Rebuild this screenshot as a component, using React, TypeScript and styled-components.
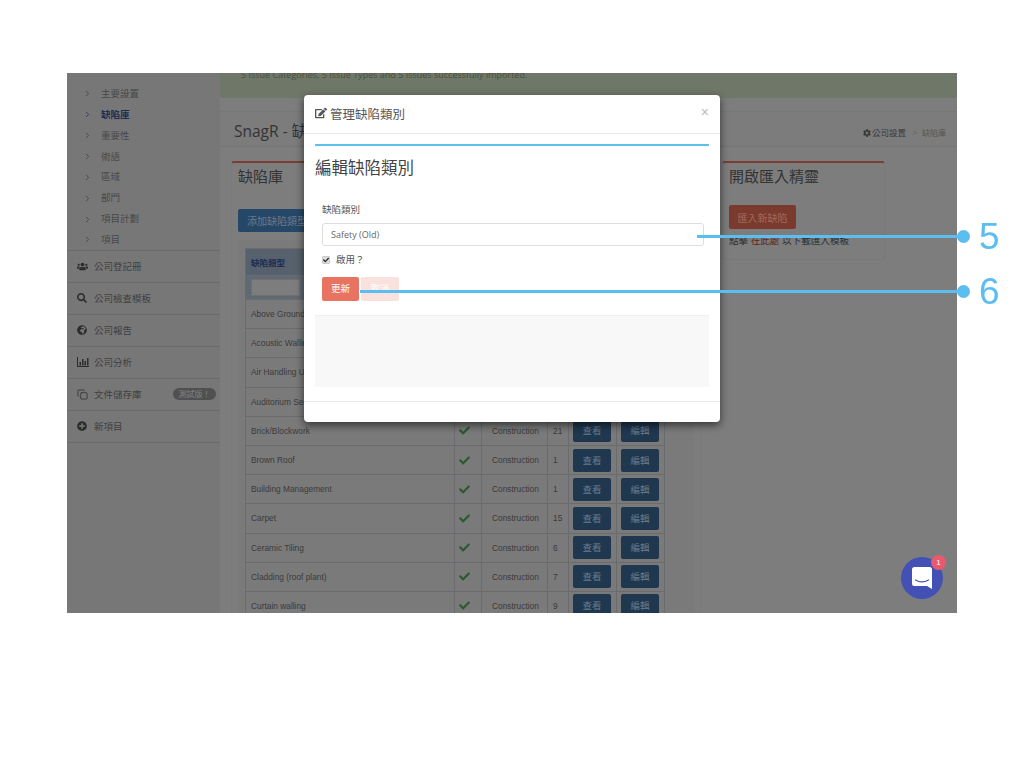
import React from "react";
import styled, { createGlobalStyle } from "styled-components";
import { FaEdit, FaUsers, FaSearch, FaGlobeAfrica, FaPlusCircle, FaCog, FaCheck } from "react-icons/fa";
import { ChevronRight, Copy } from "lucide-react";

const CJK = `"Open Sans", "Noto Sans CJK TC", sans-serif`;
const ARIAL = `"Liberation Sans", "Noto Sans CJK TC", sans-serif`;

const Global = createGlobalStyle`
  html, body { margin: 0; padding: 0; background: #fff; }
  body { font-family: ${CJK}; }
`;

const Stage = styled.div`
  position: relative;
  width: 1024px;
  height: 768px;
  padding: 73px 67px 0;
  box-sizing: border-box;
  overflow: hidden;
  filter: blur(0.3px);
`;

const Screen = styled.div`
  position: relative;
  width: 890px;
  height: 540px;
  overflow: hidden;
  background: #7d7d7d;
`;

const Backdrop = styled.div`
  display: flex;
  height: 100%;
`;

const Sidebar = styled.nav`
  width: 153px;
  flex: none;
  background: #777;
  padding-top: 10px;
  box-sizing: border-box;
`;

const SubItem = styled.div<{ $active?: boolean }>`
  height: 20.86px;
  display: flex;
  align-items: center;
  padding-left: 16px;
  gap: 9px;
  font-size: 9.5px;
  line-height: 22px;
  padding-top: 1px;
  box-sizing: border-box;
  font-weight: ${(p) => (p.$active ? 700 : 400)};
  color: ${(p) => (p.$active ? "#1c2e50" : "#484848")};
  svg { color: ${(p) => (p.$active ? "#1c2e50" : "#3c3c3c")}; flex: none; }
`;

const MainList = styled.div`
  border-top: 1px solid #6c6c6c;
`;

const MainItem = styled.div`
  height: 32px;
  box-sizing: border-box;
  display: flex;
  align-items: center;
  border-bottom: 1px solid #6c6c6c;
  padding: 0 4px 0 10px;
  font-size: 9.5px;
  color: #404040;
`;

const ItemIcon = styled.span`
  width: 17px;
  display: flex;
  color: #2c2c2c;
  flex: none;
`;

const Beta = styled.span`
  margin-left: auto;
  height: 12px;
  line-height: 12px;
  width: 43px;
  text-align: center;
  border-radius: 6px;
  background: #505050;
  color: #858585;
  font-size: 8px;
`;

const Main = styled.main`
  flex: 1;
  min-width: 0;
`;

const Alert = styled.div`
  height: 25px;
  background: #6f7868;
  border-radius: 0 0 3px 3px;
  padding-left: 21px;
  font-size: 9px;
  line-height: 3px;
  color: #4a5040;
  overflow: hidden;
  white-space: nowrap;
`;

const Header = styled.header`
  height: 49px;
  border-bottom: 1px solid #757575;
  display: flex;
  align-items: flex-end;
  justify-content: space-between;
  padding: 0 11px 5px 14px;
  box-sizing: border-box;
  background: linear-gradient(#7d7d7d 0 13px, #777 13px 14px, #7c7c7c 14px);
`;

const Title = styled.h1`
  margin: 0;
  font-size: 15.5px;
  line-height: 20px;
  font-weight: 400;
  color: #333;
`;

const Crumbs = styled.div`
  display: flex;
  align-items: center;
  gap: 1px;
  font-size: 8.5px;
  line-height: 12px;
  margin-bottom: 2px;
  color: #3a3a3a;
`;

const CrumbSep = styled.span`
  margin: 0 4px 0 5px;
  color: #666;
`;

const CrumbLast = styled.span`
  color: #555;
  font-size: 8px;
`;

const Cards = styled.div`
  display: flex;
  gap: 21px;
  padding: 14px 0 0 11px;
  align-items: flex-start;
`;

const Card = styled.section<{ $width: number }>`
  width: ${(p) => p.$width}px;
  box-sizing: border-box;
  flex: none;
  border-top: 2px solid #7a3e33;
  border-left: 1px solid #797979;
  border-right: 1px solid #797979;
  border-bottom: 1px solid #797979;
  border-radius: 3px;
  padding: 0 6px 11px;
`;

const CardTitle = styled.h2`
  margin: 0;
  padding-top: 3px;
  font-size: 15px;
  line-height: 20px;
  font-weight: 400;
  color: #333;
`;

const BlueButton = styled.button`
  display: inline-block;
  margin-top: 23px;
  height: 23px;
  width: 90px;
  padding: 0 0 0 9px;
  text-align: left;
  border: none;
  border-radius: 2px;
  background: #264868;
  color: #6b7a88;
  font: 400 10px ${CJK};
  white-space: nowrap;
`;

const Well = styled.div`
  margin-top: 8px;
  padding: 8px 29px 0 7px;
  background: #7a7a7a;
`;

const Table = styled.table`
  width: 420px;
  table-layout: fixed;
  border-collapse: collapse;
  border-left: 1px solid #55606e;
  border-right: 1px solid #46526a;
  border-top: 1px solid #55606e;
  font: 400 8.35px ${ARIAL};
  color: #3a3a3a;
  td, th { border: 1px solid #6a6b6e; padding: 0 0 0 5px; box-sizing: border-box; text-align: left; }
`;

const HeadRow = styled.tr`
  height: 27px;
  background: #56616d;
  th { font: 700 8.5px ${CJK}; color: #1f2c50; }
`;

const FilterRow = styled.tr`
  height: 24px;
  background: #606a75;
`;

const FilterBox = styled.div`
  width: 47px;
  height: 15px;
  background: #7d7d7d;
  border: 1px solid #707070;
`;

const Row = styled.tr`
  height: 29.2px;
`;

const CheckCell = styled.td`
  color: #2a5a2e;
  font-size: 11px;
  && { padding-left: 4px; }
  svg { display: block; }
`;

const TypeCell = styled.td`
  && { padding-left: 10px; }
`;

const BtnCell = styled.td`
  && { padding-left: 4px; }
`;

const RowBtn = styled.div`
  width: 38px;
  height: 23px;
  border-radius: 2px;
  background: #1f3850;
  color: #6b7a88;
  text-align: center;
  font: 400 9.5px/23px ${CJK};
`;

const Body = styled.p`
  margin: 5px 0 0;
  font-size: 9.6px;
  line-height: 14px;
  color: #2e2e2e;
`;

const RedLink = styled.span`
  color: #5e2219;
`;

const RedButton = styled(BlueButton)`
  margin-top: 19px;
  width: 67px;
  height: 24px;
  padding: 0;
  text-align: center;
  background: #7a3a2d;
  color: #a06a60;
  display: block;
`;

const Modal = styled.div`
  position: absolute;
  left: 237px;
  top: 22px;
  width: 416px;
  height: 327px;
  background: #fff;
  border-radius: 4px;
  box-shadow: 0 3px 9px rgba(0, 0, 0, 0.6);
  box-sizing: border-box;
  display: flex;
  flex-direction: column;
`;

const ModalHead = styled.div`
  height: 39px;
  flex: none;
  box-sizing: border-box;
  border-bottom: 1px solid #e8e8e8;
  display: flex;
  align-items: center;
  padding: 0 11px 2px;
  gap: 3px;
  font-size: 12.5px;
  color: #555;
`;

const Close = styled.span`
  margin-left: auto;
  color: #bbb;
  font: 400 14px ${ARIAL};
  position: relative;
  top: -1px;
`;

const ModalBody = styled.div`
  flex: 1;
  padding: 10px 11px 0;
`;

const Rule = styled.div`
  height: 2px;
  background: #5bc0ec;
`;

const ModalTitle = styled.h3`
  margin: 11px 0 0;
  font-size: 16.5px;
  line-height: 22px;
  font-weight: 400;
  color: #444;
`;

const Form = styled.div`
  padding: 24px 5px 0 7px;
`;

const Label = styled.div`
  font-size: 9.5px;
  line-height: 14px;
  color: #555;
`;

const Input = styled.div`
  margin-top: 6px;
  height: 23px;
  box-sizing: border-box;
  border: 1px solid #ddd;
  border-radius: 3px;
  padding-left: 8px;
  font-size: 9px;
  line-height: 21px;
  color: #666;
`;

const CheckLine = styled.div`
  margin-top: 7px;
  display: flex;
  align-items: center;
  gap: 6px;
  font-size: 9.5px;
  line-height: 14px;
  color: #555;
`;

const CheckBox = styled.span`
  width: 8px;
  height: 8px;
  background: #ddd;
  border: 1px solid #ccc;
  box-sizing: border-box;
  border-radius: 1px;
  color: #222;
  display: flex;
  align-items: center;
  justify-content: center;
  font-size: 6px;
`;

const Actions = styled.div`
  margin-top: 10px;
  display: flex;
  gap: 2px;
`;

const ActionBtn = styled.div<{ $faded?: boolean }>`
  width: ${(p) => (p.$faded ? 38 : 37)}px;
  height: 24px;
  border-radius: 2px;
  text-align: center;
  font-size: 9.5px;
  line-height: 24px;
  color: #fff;
  background: ${(p) => (p.$faded ? "#f9e1dd" : "#e87361")};
`;

const Panel = styled.div`
  margin-top: 14px;
  height: 71px;
  background: #f8f8f8;
  border-top: 1px solid #efefef;
`;

const ModalFoot = styled.div`
  height: 21px;
  box-sizing: border-box;
  flex: none;
  border-top: 1px solid #e8e8e8;
`;

const Chat = styled.div`
  position: absolute;
  left: 834px;
  top: 484px;
  width: 42px;
  height: 42px;
  border-radius: 50%;
  background: #4451b4;
  display: flex;
  align-items: center;
  justify-content: center;
`;

const Badge = styled.span`
  position: absolute;
  right: -3px;
  top: -2px;
  width: 15px;
  height: 15px;
  border-radius: 50%;
  background: #e8596e;
  color: #fff;
  font: 400 8px/15px ${ARIAL};
  text-align: center;
`;

const Callout = styled.div<{ $left: number; $top: number }>`
  position: absolute;
  left: ${(p) => p.$left}px;
  right: 60px;
  top: ${(p) => p.$top}px;
  height: 3px;
  background: #5cbdf0;
`;

const Dot = styled.span`
  position: absolute;
  right: -6px;
  top: -5px;
  width: 13px;
  height: 13px;
  border-radius: 50%;
  background: #5cbdf0;
`;

const Digit = styled.span`
  position: absolute;
  left: calc(100% + 15px);
  top: -20px;
  font: 400 37px/44px "Liberation Sans", sans-serif;
  color: #5cbdf0;
`;

const subs = ["主要設置", "缺陷庫", "重要性", "術語", "區域", "部門", "項目計劃", "項目"];

const BarsIcon = () => (
  <svg width="12" height="10" viewBox="0 0 12 10" fill="currentColor">
    <path d="M0 0h1v9h11v1H0z" />
    <path d="M2.5 5h1.5v3.5H2.5zM5 2h1.5v6.5H5zM7.5 4H9v4.5H7.5zM10 1h1.5v7.5H10z" />
  </svg>
);

const mains: { label: string; icon: React.ReactNode; beta?: boolean }[] = [
  { label: "公司登記冊", icon: <FaUsers size={11} /> },
  { label: "公司檢查模板", icon: <FaSearch size={10} /> },
  { label: "公司報告", icon: <FaGlobeAfrica size={10} /> },
  { label: "公司分析", icon: <BarsIcon /> },
  { label: "文件儲存庫", icon: <Copy size={11} strokeWidth={1.6} />, beta: true },
  { label: "新項目", icon: <FaPlusCircle size={10} /> },
];

const rows: [string, string][] = [
  ["Above Ground Drainage", "3"],
  ["Acoustic Walling", "4"],
  ["Air Handling Units", "2"],
  ["Auditorium Seating", "5"],
  ["Brick/Blockwork", "21"],
  ["Brown Roof", "1"],
  ["Building Management", "1"],
  ["Carpet", "15"],
  ["Ceramic Tiling", "6"],
  ["Cladding (roof plant)", "7"],
  ["Curtain walling", "9"],
];

export default function App() {
  return (
    <Stage>
      <Global />
      <Screen>
        <Backdrop>
          <Sidebar>
            {subs.map((s, i) => (
              <SubItem key={s} $active={i === 1}>
                <ChevronRight size={9} strokeWidth={2} />
                {s}
              </SubItem>
            ))}
            <MainList>
              {mains.map((m) => (
                <MainItem key={m.label}>
                  <ItemIcon>{m.icon}</ItemIcon>
                  {m.label}
                  {m.beta && <Beta>測試版！</Beta>}
                </MainItem>
              ))}
            </MainList>
          </Sidebar>
          <Main>
            <Alert>5 Issue Categories, 5 Issue Types and 5 Issues successfully imported.</Alert>
            <Header>
              <Title>SnagR - 缺陷庫</Title>
              <Crumbs>
                <FaCog size={8} />
                公司設置
                <CrumbSep>&gt;</CrumbSep>
                <CrumbLast>缺陷庫</CrumbLast>
              </Crumbs>
            </Header>
            <Cards>
              <Card $width={470}>
                <CardTitle>缺陷庫</CardTitle>
                <BlueButton>添加缺陷類型</BlueButton>
                <Well>
                  <Table>
                    <colgroup>
                      <col width="209" />
                      <col width="27" />
                      <col width="66" />
                      <col width="21" />
                      <col width="48" />
                      <col width="48" />
                    </colgroup>
                    <thead>
                      <HeadRow>
                        <th>缺陷類型</th>
                        <th />
                        <th />
                        <th />
                        <th />
                        <th />
                      </HeadRow>
                      <FilterRow>
                        <td>
                          <FilterBox />
                        </td>
                        <td />
                        <td />
                        <td />
                        <td />
                        <td />
                      </FilterRow>
                    </thead>
                    <tbody>
                      {rows.map(([name, count]) => (
                        <Row key={name}>
                          <td>{name}</td>
                          <CheckCell>
                            <FaCheck size={11} />
                          </CheckCell>
                          <TypeCell>Construction</TypeCell>
                          <td>{count}</td>
                          <BtnCell>
                            <RowBtn>查看</RowBtn>
                          </BtnCell>
                          <BtnCell>
                            <RowBtn>編輯</RowBtn>
                          </BtnCell>
                        </Row>
                      ))}
                    </tbody>
                  </Table>
                </Well>
              </Card>
              <Card $width={163}>
                <CardTitle>開啟匯入精靈</CardTitle>
                <RedButton>匯入新缺陷</RedButton>
                <Body>
                  點擊 <RedLink>在此處</RedLink> 以下載匯入模板
                </Body>
              </Card>
            </Cards>
          </Main>
        </Backdrop>
        <Modal>
          <ModalHead>
            <FaEdit size={12} />
            管理缺陷類別
            <Close>×</Close>
          </ModalHead>
          <ModalBody>
            <Rule />
            <ModalTitle>編輯缺陷類別</ModalTitle>
            <Form>
              <Label>缺陷類別</Label>
              <Input>Safety (Old)</Input>
              <CheckLine>
                <CheckBox>
                  <FaCheck />
                </CheckBox>
                啟用？
              </CheckLine>
              <Actions>
                <ActionBtn>更新</ActionBtn>
                <ActionBtn $faded>取消</ActionBtn>
              </Actions>
            </Form>
            <Panel />
          </ModalBody>
          <ModalFoot />
        </Modal>
        <Chat>
          <svg width="20" height="22" viewBox="0 0 20 22">
            <path d="M2.5 0h15A2.5 2.5 0 0 1 20 2.5V22l-5-3H2.5A2.5 2.5 0 0 1 0 16.5v-14A2.5 2.5 0 0 1 2.5 0z" fill="#fff" />
            <path d="M3.5 13c4 2.4 9 2.4 13 0" fill="none" stroke="#4451b4" strokeWidth="1.2" strokeLinecap="round" />
          </svg>
          <Badge>1</Badge>
        </Chat>
      </Screen>
      <Callout $left={697} $top={235}>
        <Dot />
        <Digit>5</Digit>
      </Callout>
      <Callout $left={360} $top={290}>
        <Dot />
        <Digit>6</Digit>
      </Callout>
    </Stage>
  );
}
